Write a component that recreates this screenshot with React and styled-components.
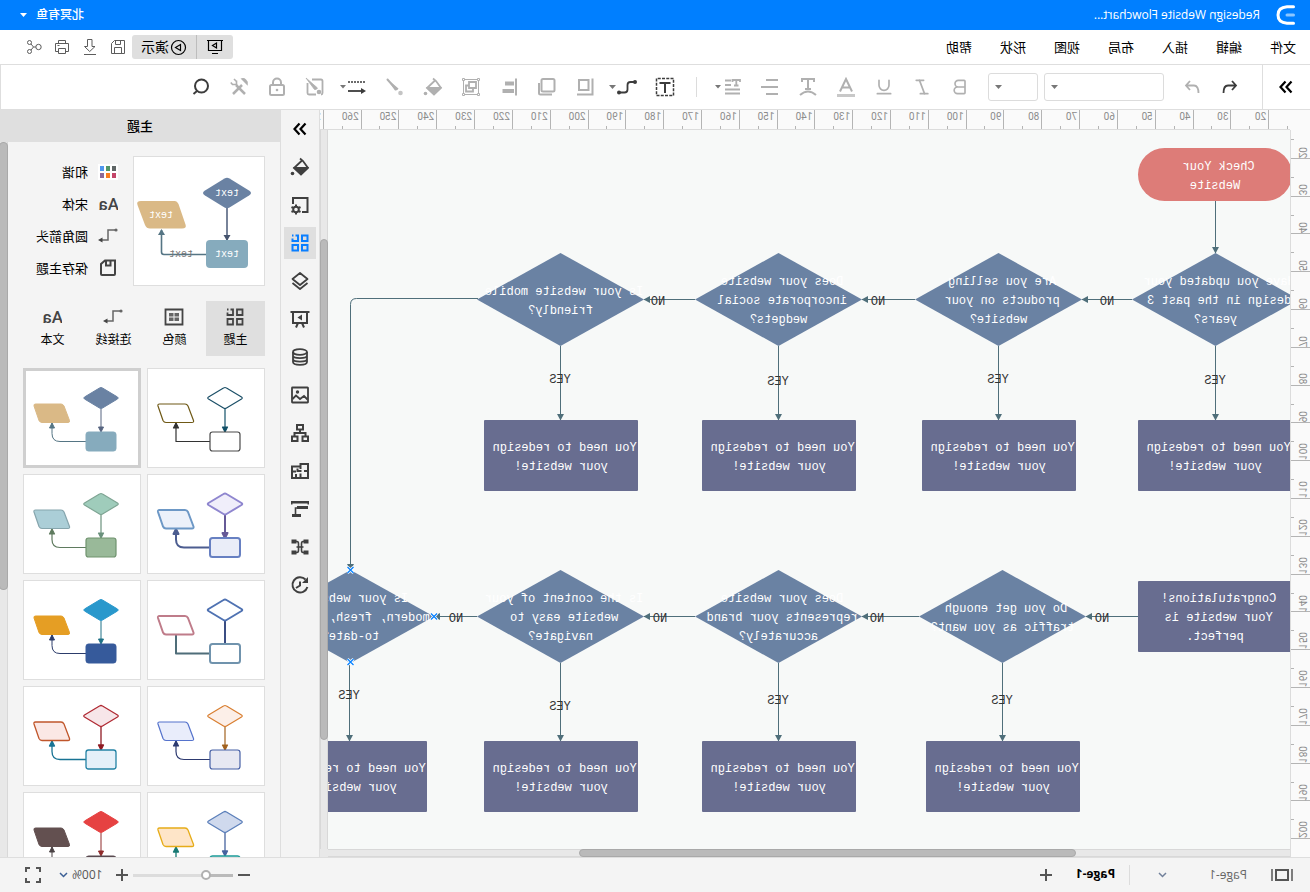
import React from "react";
import styled, { createGlobalStyle, css } from "styled-components";
import { Bold, Italic, Underline } from "lucide-react";

const UI_FONT = `"Open Sans", "Noto Sans CJK SC", sans-serif`;
const NODE_FONT = `"Liberation Mono", "Noto Sans CJK SC", monospace`;

const Global = createGlobalStyle`
  *, *::before, *::after { box-sizing: border-box; }
  body { margin: 0; overflow: hidden; background: #fff; }
  button, select, input { font: inherit; color: inherit; margin: 0; }
  button { border: 0; padding: 0; background: none; cursor: pointer; }
  svg { display: block; }
`;

const Shell = styled.div`
  display: flex;
  flex-direction: column;
  height: 100vh;
  font-family: ${UI_FONT};
  font-size: 12px;
  color: #000;
  background: #fff;
  transform: scaleX(-1);
`;

/* ---------- header ---------- */
const TitleBar = styled.header`
  flex: none;
  display: flex;
  align-items: center;
  justify-content: space-between;
  height: 30px;
  padding: 0 20px 0 14px;
  background: #007fff;
  color: #fff;
`;
const Brand = styled.div`
  display: flex;
  align-items: center;
  gap: 16px;
`;
const DocName = styled.h1`
  margin: 0;
  font-size: 12px;
  font-weight: 400;
  line-height: 16px;
`;
const UserButton = styled.button`
  display: flex;
  align-items: center;
  gap: 9px;
  font-weight: 500;
  line-height: 16px;
`;

const MenuBar = styled.nav`
  flex: none;
  display: flex;
  align-items: center;
  justify-content: space-between;
  height: 35px;
  padding: 0 20px 0 14px;
  border-bottom: 1px solid #dedede;
`;
const MenuList = styled.div`
  display: flex;
  gap: 28px;
`;
const MenuLink = styled.a`
  font-size: 13px;
  line-height: 20px;
  color: #000;
  text-decoration: none;
`;
const FileActions = styled.div`
  display: flex;
  align-items: center;
`;
const PresentGroup = styled.div`
  display: flex;
  height: 24px;
  border-radius: 3px;
  overflow: hidden;
  background: #dfdfdf;
`;
const PresentButton = styled.button`
  display: flex;
  align-items: center;
  gap: 1px;
  padding: 0 9px;
  font-size: 14px;
  line-height: 20px;
  & + & { border-left: 1px solid #bdbdbd; }
`;
const FileButton = styled.button`
  display: grid;
  place-items: center;
  width: 28px;
  height: 28px;
  color: #5c5c5c;
`;

/* ---------- tool bar ---------- */
const ToolBar = styled.div`
  flex: none;
  display: flex;
  align-items: center;
  height: 45px;
  border-bottom: 1px solid #dedede;
  border-right: 1px solid #dedede;
`;
const ExpandButton = styled.button`
  display: grid;
  place-items: center;
  width: 48px;
  height: 44px;
  border-right: 1px solid #dedede;
`;
const Tools = styled.div`
  display: flex;
  align-items: center;
  padding-left: ${(p) => p.$lead}px;
`;
const Tool = styled.button`
  display: grid;
  place-items: center;
  width: 38px;
  height: 32px;
  margin-right: ${(p) => (p.$menu ? 4 : 0)}px;
  color: ${(p) => (p.$active ? "#3c3c3c" : "#b0b0b0")};
`;
const Pickers = styled.div`
  display: flex;
  gap: 6px;
  margin: 0 9px;
`;
const Picker = styled.label`
  position: relative;
  display: block;
  width: ${(p) => p.$width}px;
  svg { position: absolute; right: 7px; top: 12px; pointer-events: none; }
`;
const PickerSelect = styled.select`
  appearance: none;
  display: block;
  width: 100%;
  height: 28px;
  padding: 0 16px 0 6px;
  border: 1px solid #dcdcdc;
  border-radius: 3px;
  background: #fff;
`;
const Separator = styled.span`
  width: 1px;
  height: ${(p) => p.$height}px;
  background: #dcdcdc;
`;

/* ---------- work area ---------- */
const Work = styled.main`
  flex: 1;
  min-height: 0;
  display: flex;
`;
const Stage = styled.section`
  flex: 1;
  min-width: 0;
  display: grid;
  grid-template-columns: 20px minmax(0, 1fr) 8px;
  grid-template-rows: 20px minmax(0, 1fr) 8px;
  background: #fafafa;
`;
const RulerTop = styled.div`
  grid-column: 2 / 4;
  grid-row: 1;
  overflow: hidden;
  border-bottom: 1px solid #dcdcdc;
`;
const RulerTopScale = styled.div`
  display: grid;
  grid-template-columns: repeat(27, 1fr);
  width: 1021px;
  height: 19px;
  margin-left: -17px;
`;
const markText = css`
  font-family: Roboto, sans-serif;
  font-size: 10px;
  line-height: 12px;
  color: #8c8c8c;
`;
const TopMark = styled.span`
  ${markText}
  padding: 1px 0 0 2px;
  border-left: 1px solid #b4b4b4;
  background: linear-gradient(#b4b4b4, #b4b4b4) 18px 16px / 1px 3px no-repeat;
`;
const RulerSide = styled.div`
  grid-column: 1;
  grid-row: 2 / 4;
  overflow: hidden;
  border-right: 1px solid #dcdcdc;
`;
const RulerSideScale = styled.div`
  display: grid;
  grid-template-rows: repeat(20, 1fr);
  height: 756px;
  margin-top: -9px;
`;
const SideMark = styled.span`
  ${markText}
  display: flex;
  align-items: flex-end;
  padding-left: 2px;
  border-bottom: 1px solid #b4b4b4;
  background: linear-gradient(#b4b4b4, #b4b4b4) 16px 18px / 3px 1px no-repeat;
  b {
    font-weight: 400;
    writing-mode: vertical-rl;
    transform: rotate(180deg);
  }
`;
const Canvas = styled.div`
  grid-column: 2;
  grid-row: 2;
  position: relative;
  overflow: hidden;
  background: #f7f9f8;
`;
const Track = styled.div`
  display: flex;
  background: #e8e8e8;
  border: 1px solid #d8d8d8;
  border-width: ${(p) => (p.$vertical ? "0 1px" : "1px 0")};
  flex-direction: ${(p) => (p.$vertical ? "column" : "row")};
  grid-column: ${(p) => (p.$vertical ? 3 : 2)};
  grid-row: ${(p) => (p.$vertical ? 2 : 3)};
  padding: ${(p) => (p.$vertical ? `${p.$from}px 0 0` : `0 0 0 ${p.$from}px`)};
`;
const Thumb = styled.span`
  flex: 0 0 ${(p) => p.$size}px;
  margin: ${(p) => (p.$vertical ? "0 -1px" : "-1px 0")};
  border: 1px solid #a9a9a9;
  border-radius: 4px;
  background: #bababa;
`;
const TrackCorner = styled.span`
  grid-column: 3;
  grid-row: 3;
  background: #e8e8e8;
`;

/* ---------- diagram ---------- */
const shapes = {
  diamond: css`
    width: 167px; height: 93px;
    &::before { background: #6a82a3; clip-path: polygon(50% 0, 100% 50%, 50% 100%, 0 50%); }
  `,
  box: css`
    width: 154px; height: 71px;
    &::before { background: #686d90; border-radius: 1px; }
  `,
  start: css`
    width: 154px; height: 53px;
    &::before { background: #dd7c78; border-radius: 27px; }
  `,
};
const Node = styled.div`
  position: absolute;
  z-index: 0;
  display: flex;
  align-items: center;
  justify-content: center;
  padding-top: 4px;
  font: 12px/19px ${NODE_FONT};
  color: #fff;
  white-space: pre;
  text-align: center;
  &::before { content: ""; position: absolute; inset: 0; z-index: -1; }
  ${(p) => shapes[p.$shape]}
`;
const EdgeLabel = styled.span`
  position: absolute;
  width: 30px;
  margin: -7px 0 0 -15px;
  font: 12px/16px ${NODE_FONT};
  color: #333;
  text-align: center;
`;
const Edges = styled.svg`
  position: absolute;
  left: 0;
  top: 0;
  overflow: visible;
`;

const REDESIGN = "You need to redesign \nyour website!";
const nodes = [
  ["start", -2, 18, "Check Your \nWebsite"],
  ["diamond", -9, 123, "Have you updated your \ndesign in the past 3 \nyears?"],
  ["diamond", 208, 123, "Are you selling \nproducts on your \nwebsite?"],
  ["diamond", 428, 123, "Does your website \nincorporate social \nwedgets?"],
  ["diamond", 646, 123, "Is your website mobile \nfriendly?"],
  ["box", -2, 290, REDESIGN],
  ["box", 214, 290, REDESIGN],
  ["box", 434, 290, REDESIGN],
  ["box", 652, 290, REDESIGN],
  ["box", -2, 451, "Congratulations! \nYour website is \nperfect."],
  ["diamond", 204, 440, "Do you get enough \ntraffic as you want?"],
  ["diamond", 428, 440, "Does your website \nrepresents your brand \naccurately?"],
  ["diamond", 646, 440, "Is the content of your \nwebsite easy to \nnavigate?"],
  ["diamond", 856, 440, "Is your website \nmodern, fresh, and up-\nto-date?"],
  ["box", 210, 611, REDESIGN],
  ["box", 434, 611, REDESIGN],
  ["box", 652, 611, REDESIGN],
  ["box", 863, 611, REDESIGN],
];
const edgeLabels = [
  [183, 171, "NO"], [412, 171, "NO"], [632, 171, "NO"],
  [188, 488, "NO"], [413, 488, "NO"], [630, 488, "NO"], [834, 488, "NO"],
  [75, 250, "YES"], [292, 249, "YES"], [512, 251, "YES"], [730, 249, "YES"],
  [288, 570, "YES"], [512, 570, "YES"], [730, 576, "YES"], [941, 565, "YES"],
];
const edges = [
  "M74.5 71V123", "M74.5 216V290", "M291.5 216V290", "M511.5 216V290", "M729.5 216V290",
  "M158 169.5H208", "M375 169.5H428", "M595 169.5H646",
  "M812 168.5H933.5Q939.5 168.5 939.5 174.5V440",
  "M152 486.5H204", "M371 486.5H428", "M595 486.5H646", "M813 486.5H856",
  "M287.5 533V611", "M511.5 533V611", "M729.5 533V611", "M940.5 533V611",
];
const anchors = [[939.5, 440], [856, 486.5], [939.5, 532]];

/* ---------- icons ---------- */
const Icon = ({ w = 20, h = 20, sw = 2, children }) => (
  <svg width={w} height={h} viewBox={`0 0 ${w} ${h}`} fill="none" stroke="currentColor" strokeWidth={sw} aria-hidden="true">
    {children}
  </svg>
);
const CaretDown = ({ color = "currentColor" }) => (
  <svg width="7" height="4" viewBox="0 0 7 4" aria-hidden="true"><path d="M0 0h7L3.500 4z" fill={color} /></svg>
);
const Chevron = ({ color }) => (
  <svg width="9" height="6" viewBox="0 0 9 6" fill="none" stroke={color} strokeWidth="1.500" aria-hidden="true"><path d="M1 1l3.500 3.500L8 1" /></svg>
);
const DoubleChevron = () => <Icon w={14} h={14} sw={2.2}><path d="M1.500 1.500L6.500 7l-5 5.500M7.500 1.500L12.500 7l-5 5.500" /></Icon>;

const fileIcons = {
  保存: <Icon w={16} h={16} sw={1}><path d="M1.500 1.500H11.500L14.500 4.500V14.500H1.500zM4.500 14.500V8.500H11.500V14.500M5.500 1.500V5.500H10.500V1.500" /></Icon>,
  下载: <Icon w={16} h={18} sw={1}><path d="M2 16.500H14M6 1.500H10.500V8.500H13.500L8.300 13.500L3 8.500H6z" /></Icon>,
  打印: <Icon w={16} h={16} sw={1}><path d="M4.500 4.500V1.500H11.500V4.500M4.500 12.500H1.500V4.500H14.500V12.500H11.500M4.500 9.500H11.500V14.500H4.500zM10.500 6.500H12.500" /></Icon>,
  分享: <Icon w={16} h={16} sw={1}><circle cx="3.500" cy="8" r="2.700" /><circle cx="12.500" cy="3.500" r="2" /><circle cx="12.500" cy="12.500" r="2" /><path d="M6.200 8H8.500L11 5M8.500 8L11 11" /></Icon>,
};

const Bucket = () => (
  <Icon sw={1.8}>
    <path d="M10 1.500L7 4L2 11L9 17.500L16 11L8 3.500" />
    <path d="M3 11H15L9 17z" fill="currentColor" />
    <circle cx="17.500" cy="16.500" r="1.800" fill="currentColor" stroke="none" />
  </Icon>
);
const QuadSquares = ({ sw = 2 }) => (
  <Icon w={18} h={18} sw={sw}>
    <path d="M1.500 1.500H7V7H1.500zM1.500 11H7V16.500H1.500zM11 11H16.500V16.500H11z" />
    <path d="M13.500 1.500H11V7H16.500V4.500M15.500 1.500h1.500" />
  </Icon>
);

const textTools = [
  ["加粗", <Bold size={20} strokeWidth={2} />],
  ["斜体", <Italic size={20} strokeWidth={2} />],
  ["下划线", <Underline size={20} strokeWidth={2} />],
  ["字体颜色", <Icon><path d="M4 14.500L10 2L16 14.500M6 10.500H14" /><path d="M1 18.500H19" stroke="#c8c8c8" strokeWidth="3" /></Icon>],
  ["文字路径", <Icon><path d="M4 5V2H16V5M10 2V12M7 12H13M2 18Q10 11 18 18" /></Icon>],
  ["对齐", <Icon><path d="M2 3H14M2 10H19M2 17H14" strokeWidth="1.800" /></Icon>],
];
const insertTools = [
  ["文本框", true, <Icon sw={1.5}><path d="M1.500 1.500H18.500V18.500H1.500z" strokeDasharray="3 1.250" /><path d="M4.500 6H15.500M10 6V16" strokeWidth="2" /></Icon>],
  ["连接线", true, <Icon w={38} sw={1.8}><circle cx="11" cy="5" r="2" fill="currentColor" stroke="none" /><circle cx="27" cy="15.500" r="2" fill="currentColor" stroke="none" /><path d="M11 5H15.500Q18.500 5 18.500 8V12.500Q18.500 15.500 21.500 15.500H27" /><path d="M30 8h7L33.500 12z" fill="#777" stroke="none" /></Icon>, true],
  ["置于底层", false, <Icon><path d="M6.500 3H16V13H6.500zM2.500 1.500V17.500H18" /></Icon>],
  ["置于顶层", false, <Icon><rect x="2.500" y="2" width="13" height="12.500" rx="1.500" /><path d="M18 6V16Q18 17.500 16.500 17.500H5" /></Icon>],
  ["对齐形状", false, <Icon><path d="M3 1.500V18.500" /><path d="M5 4.500H14V8.500H5zM5 12H16.500V16H5z" fill="currentColor" stroke="none" /></Icon>],
  ["组合", false, <Icon sw={1}><path d="M2.500 2.500H17.500V17.500H2.500z" /><path d="M1.500 1.500h2v2h-2zM16.500 1.500h2v2h-2zM1.500 16.500h2v2h-2zM16.500 16.500h2v2h-2z" fill="#fff" /><path d="M5 5H12V11H5zM8 11V14.500H15V8.500H12" strokeWidth="1.800" /></Icon>],
  ["填充", false, <Bucket />],
  ["线条", false, <Icon><path d="M18.500 1.500L10 13.500Q7.500 14 6.500 11.500z" fill="currentColor" stroke="none" /><path d="M18 2L9 12" /><circle cx="4.500" cy="16" r="2.300" fill="#c4c4c4" stroke="none" /></Icon>],
  ["线型", true, <Icon w={38} h={20} sw={1.6}><path d="M11 5H28" strokeDasharray="2 1" /><path d="M13 14H28" strokeWidth="1.800" /><path d="M10 14l5-3v6z" fill="currentColor" stroke="none" /><path d="M30 8h6L33 11.500z" fill="#777" stroke="none" /></Icon>, true],
  ["样式", false, <Icon sw={1.8}><path d="M13 2.500H4Q2.500 2.500 2.500 4V16Q2.500 17.500 4 17.500M9 17.500H16Q17.500 17.500 17.500 16V6" /><path d="M19 1L10.500 12.500Q8.500 13 7.500 11z" fill="currentColor" strokeWidth=".8" /><circle cx="6" cy="15" r="2.300" fill="currentColor" stroke="none" /></Icon>],
  ["锁定", false, <Icon><rect x="3" y="8" width="14" height="10" rx="1.500" /><path d="M6 8V5.500A4 4 0 0 1 14 5.500V8" /><circle cx="10" cy="13" r="1.300" fill="currentColor" stroke="none" /></Icon>],
  ["工具", false, <Icon><path d="M7 8L16 17" strokeWidth="2.500" /><path d="M2 7L7 2Q5 1.500 3.500 3L2 5z" fill="currentColor" strokeWidth="1.500" /><path d="M13 8L4 17" strokeWidth="2.500" /><path d="M12.500 3.500V7.500H16.500L18.200 5.500M15 2L12.500 4.500" strokeWidth="1.600" /></Icon>],
  ["搜索", true, <Icon><circle cx="9.500" cy="9" r="6.500" /><path d="M14 14L17.500 17" /></Icon>],
];

const stripIcons = [
  ["填充", <Bucket />],
  ["页面设置", <Icon><path d="M8 17H2.500V3H17V9" /><circle cx="14" cy="14.500" r="2.800" /><path d="M14 9.500V11M14 18V19.500M9.500 12l1.500.8M17 16.200l1.500.8M9.500 17l1.500-.8M17 12.800l1.500-.8" /></Icon>],
  ["主题", <QuadSquares />],
  ["图层", <Icon sw={1.8}><path d="M10 2L17.500 8L10 14L2.500 8zM2.500 12L10 18L17.500 12" strokeLinejoin="round" /></Icon>],
  ["演示文稿", <Icon><path d="M.5 3H19.500M3 3V14H17V3M8 14L6 18.500M12 14L14 18.500" /><path d="M8 5.500v6l4.500-3z" fill="currentColor" stroke="none" /></Icon>],
  ["数据", <Icon sw={1.8}><ellipse cx="10" cy="5" rx="7" ry="2.800" /><path d="M3 5V15C3 18.700 17 18.700 17 15V5M3 8.500C3 12 17 12 17 8.500M3 12C3 15.500 17 15.500 17 12" /></Icon>],
  ["图片", <Icon sw={1.8}><rect x="2" y="2.500" width="16" height="15" rx=".5" /><path d="M2.500 14.500L6 11L10 14L14 10.500L17.500 14" /><circle cx="12.500" cy="7" r="1.700" fill="currentColor" stroke="none" /></Icon>],
  ["组织结构", <Icon><path d="M7 2H13V6.500H7zM2 13.500H7.500V18H2zM12.500 13.500H18V18H12.500zM10 6.500V10M4.500 13.500V10H15.500V13.500" /></Icon>],
  ["平面图", <Icon><path d="M2 3H9.500V5.500H18V17H2zM9.500 5.500V8M2 10H6M8.500 10H12.500V7.500M9.500 12.500V17M14 17V13M14 10.500H18" /></Icon>],
  ["甘特图", <Icon><path d="M1 2H19V5.500H17.500V4.500H2.500V5.500H1z" fill="currentColor" stroke="none" /><path d="M2 8.500H13" strokeWidth="3" /><path d="M11 9H14.500V16" strokeWidth="1.600" /><path d="M9 16.500H18" strokeWidth="3" /></Icon>],
  ["网络", <Icon sw={1.6}><path d="M1.500 2.500h5v4h-5zM13.500 2.500h5v4h-5zM1.500 13.500h5v4h-5zM13.500 13.500h5v4h-5z" fill="currentColor" stroke="none" /><path d="M5 4.500H7Q8.500 4.500 8.500 7V13Q8.500 15.500 7 15.500H5M15 4.500H13Q11.500 4.500 11.500 7V13Q11.500 15.500 13 15.500H15M6.500 10H13.500" /></Icon>],
  ["历史记录", <Icon><path d="M4.500 4.500A7.600 7.600 0 1 1 2.600 12" /><path d="M2 2V8H8z" fill="currentColor" stroke="none" /><path d="M10 6.500V10.500L14 13" /></Icon>],
];

/* ---------- side strip and panel ---------- */
const Strip = styled.aside`
  flex: none;
  display: flex;
  flex-direction: column;
  align-items: center;
  gap: 6px;
  width: 40px;
  padding-top: 3px;
  background: #f4f4f4;
  border: 1px solid #dedede;
  border-width: 0 1px;
`;
const StripButton = styled.button`
  display: grid;
  place-items: center;
  width: 32px;
  height: 32px;
  color: ${(p) => (p.$strong ? "#000" : p.$active ? "#0a7fff" : "#3f3f3f")};
  background: ${(p) => (p.$active ? "#dfdfdf" : "none")};
`;
const Panel = styled.aside`
  flex: none;
  display: flex;
  flex-direction: column;
  width: 280px;
  background: #f4f4f4;
`;
const PanelTitle = styled.h2`
  flex: none;
  margin: 0;
  height: 32px;
  font-size: 13px;
  line-height: 32px;
  font-weight: 500;
  text-align: center;
  background: #dfdfdf;
`;
const PanelBody = styled.div`
  flex: 1;
  min-height: 0;
  display: flex;
`;
const PanelScroll = styled.div`
  flex: 1;
  overflow: hidden;
  padding: 14px 15px 0;
`;
const PanelTrack = styled.div`
  flex: none;
  display: flex;
  flex-direction: column;
  width: 8px;
  background: #e8e8e8;
  border-left: 1px solid #d8d8d8;
`;
const Summary = styled.div`
  display: flex;
  gap: 15px;
`;
const Preview = styled.div`
  flex: none;
  width: 132px;
  height: 130px;
  background: #fff;
  border: 1px solid #dedede;
`;
const Options = styled.div`
  display: flex;
  flex-direction: column;
`;
const Option = styled.button`
  display: flex;
  align-items: center;
  gap: 10px;
  height: 32px;
  font-size: 13px;
  line-height: 20px;
  svg { color: #444; }
`;
const Tabs = styled.div`
  display: flex;
  gap: 2px;
  margin: 15px -8px 12px 0;
`;
const Tab = styled.button`
  display: flex;
  flex-direction: column;
  align-items: center;
  gap: 3px;
  width: 59px;
  height: 55px;
  padding-top: 6px;
  font-size: 12px;
  line-height: 20px;
  background: ${(p) => (p.$active ? "#dfdfdf" : "none")};
  svg { color: #444; }
`;
const Themes = styled.div`
  display: grid;
  grid-template-columns: repeat(2, 118px);
  gap: 6px;
`;
const ThemeCard = styled.button`
  display: grid;
  place-items: center;
  height: 100px;
  background: #fff;
  border: ${(p) => (p.$selected ? "3px solid #cfcfcf" : "1px solid #dedede")};
  overflow: hidden;
  svg { margin: ${(p) => (p.$selected ? "-2px" : "0")}; }
`;

const AaIcon = () => (
  <svg width="20" height="20" viewBox="0 0 20 20" aria-hidden="true">
    <text x="-1" y="16" fontFamily="Roboto, sans-serif" fontSize="17" fontWeight="500" fill="#444">Aa</text>
  </svg>
);
const RouteIcon = () => (
  <Icon sw={1.5}><circle cx="2" cy="4" r="1.600" fill="#666" stroke="none" /><path d="M2 4H10V14H17" stroke="#666" /><path d="M20 14l-4.500-2.500v5z" fill="#444" stroke="none" /></Icon>
);
const SwatchIcon = () => (
  <svg width="20" height="16" viewBox="0 0 20 16" aria-hidden="true">
    <path d="M0 0H20V16H0z" fill="#fff" />
    {["#5f6666", "#539668", "#4f97ee", "#c44569", "#fb7f1f", "#8e6a99"].map((c, i) => (
      <rect key={c} x={2 + (i % 3) * 6} y={2 + Math.floor(i / 3) * 7} width="4" height="5" fill={c} />
    ))}
  </svg>
);

const solid = (d, p, r, a, b) => ({ d: [d, d], p: [p, p], r: [r, r], a, b, w: 1 });
const themes = [
  { name: "线框", d: ["#fff", "#1c5068"], p: ["#fff", "#6f5916"], r: ["#fff", "#4a4a4a"], a: "#125068", b: "#333", w: 1.2, sharp: true },
  { name: "和谐", ...solid("#6a82a3", "#dab986", "#86abbd", "#566480", "#557584") },
  { name: "淡紫", d: ["#f0eefa", "#8f86cf"], p: ["#ecf1fa", "#6d98c6"], r: ["#eaedf8", "#6780c2"], a: "#665a97", b: "#4c5d90", w: 2 },
  { name: "薄荷", d: ["#9fccbb", "#7fa594"], p: ["#abced7", "#86a5ad"], r: ["#99b999", "#70936f"], a: "#6b917c", b: "#5f7b5f", w: 1.2 },
  { name: "描边", d: ["#fff", "#4f72b2"], p: ["#fff", "#bf7c8a"], r: ["#fff", "#7093ad"], a: "#3b4d83", b: "#4f6d79", w: 2, sharp: true, plain: true },
  { name: "鲜明", ...solid("#2998cc", "#e59e24", "#365a9b", "#1f7186", "#2c3c6b") },
  { name: "柔和", d: ["#fcefe8", "#d97f31"], p: ["#e9edfb", "#5573cc"], r: ["#e7e8f2", "#4760a6"], a: "#a2621f", b: "#2d3a70", w: 1.2 },
  { name: "玫瑰", d: ["#f7e6e9", "#b02a33"], p: ["#fbe8e5", "#c0562b"], r: ["#e5f0f9", "#2483a5"], a: "#8f1a22", b: "#187394", w: 1.3 },
  { name: "晴空", d: ["#cfd9ed", "#5b7fba"], p: ["#fee5c8", "#e6ac18"], r: ["#dff3f2", "#1d9a98"], a: "#46639f", b: "#187a74", w: 1.3 },
  { name: "热烈", ...solid("#e64242", "#635050", "#5a4a50", "#8f2a2a", "#4a4244") },
];
const ThemeArt = ({ t }) => (
  <svg width="116" height="98" viewBox="1 1 116 98" fill="none" strokeWidth={t.w} strokeLinejoin="round" aria-hidden="true">
    <path d="M40 41V63" stroke={t.a} />
    <path d={t.sharp ? "M55 73.500H89V55" : "M55 73.500H81Q89 73.500 89 65.500V55"} stroke={t.b} />
    {!t.plain && <path d="M37.500 59h5l-2.500 5z" fill={t.a} stroke={t.a} />}
    {!t.plain && <path d="M86.500 60h5l-2.500-5z" fill={t.b} stroke={t.b} />}
    <path d="M38.500 20Q40 19 41.500 20L56.500 29Q58 30 56.500 31L41.500 40Q40 41 38.500 40L23.500 31Q22 30 23.500 29z" fill={t.d[0]} stroke={t.d[1]} />
    <path d="M80 36H105.500Q107.500 36 107 38L102 52.500Q101 54.500 99 54.500H73Q71 54.500 71.500 52.500L77 38Q78 36 80 36z" fill={t.p[0]} stroke={t.p[1]} />
    <rect x="25" y="64" width="30" height="19" rx="2.500" fill={t.r[0]} stroke={t.r[1]} />
  </svg>
);
const PreviewArt = () => (
  <svg width="130" height="128" viewBox="1 1 130 128" fill="none" strokeWidth="1.600" aria-hidden="true">
    <path d="M38 52V84" stroke="#566480" />
    <path d="M34.500 79h7l-3.500 6z" fill="#46546e" />
    <path d="M59 98.500H101Q103.500 98.500 103.500 96V74" stroke="#557584" />
    <path d="M100 79h7l-3.500-6z" fill="#557584" />
    <path d="M35.500 22.500Q38 21 40.500 22.500L60 34.500Q64 37 60 39.500L40.500 51.500Q38 53 35.500 51.500L16 39.500Q12 37 16 34.500z" fill="#6a82a3" />
    <path d="M90 45H124Q129 45 127.500 49L120 69Q118.500 72.500 115 72.500H83Q78 72.500 79.500 68.500L86.500 48Q88 45 90 45z" fill="#dab986" />
    <rect x="17" y="84" width="42" height="28" rx="4" fill="#86abbd" />
    <g fontFamily="Liberation Mono, monospace" fontSize="10" textAnchor="middle">
      <text x="38" y="40" fill="#fff">text</text>
      <text x="104" y="62" fill="#fff">text</text>
      <text x="38" y="101" fill="#fff">text</text>
      <text x="84" y="101" fill="#777">text</text>
    </g>
  </svg>
);

/* ---------- footer ---------- */
const Footer = styled.footer`
  flex: none;
  display: flex;
  align-items: center;
  justify-content: space-between;
  height: 35px;
  padding: 0 24px 0 17px;
  background: #f4f4f4;
  border-top: 1px solid #dedede;
  color: #555;
`;
const FooterGroup = styled.div`
  display: flex;
  align-items: center;
  gap: ${(p) => p.$gap}px;
`;
const PageSelect = styled.button`
  display: flex;
  align-items: center;
  gap: 42px;
  font-size: 12px;
  line-height: 20px;
  color: #666;
`;
const PageTab = styled.button`
  padding-bottom: 2px;
  font-size: 12px;
  line-height: 20px;
  font-weight: 700;
  color: #000;
`;
const IconButton = styled.button`
  display: grid;
  place-items: center;
`;
const ZoomSlider = styled.input`
  appearance: none;
  width: 100px;
  height: 12px;
  background: linear-gradient(90deg, #bababa 26%, #dcdcdc 26%) center / 100% 3px no-repeat;
  &::-webkit-slider-thumb {
    appearance: none;
    width: 10px;
    height: 10px;
    border: 2px solid #b0b0b0;
    border-radius: 50%;
    background: #fff;
  }
`;
const ZoomValue = styled.button`
  display: flex;
  align-items: center;
  gap: 4px;
  padding-left: 8px;
  font-size: 12px;
  line-height: 20px;
`;

const tens = (from, count) => Array.from({ length: count }, (_, i) => from + i * 10);

export default function App() {
  return (
    <Shell>
      <Global />
      <TitleBar>
        <Brand>
          <svg width="20" height="20" viewBox="0 0 20 20" fill="none" strokeLinecap="round" strokeWidth="3" aria-hidden="true">
            <path d="M2.500 1.800H9Q18 2.500 18 10T9 18.200H2.500" stroke="#fff" />
            <path d="M2.500 10H9" stroke="#8cc6ff" />
          </svg>
          <DocName>Redesign Website Flowchart...</DocName>
        </Brand>
        <UserButton>北冥有鱼<CaretDown /></UserButton>
      </TitleBar>

      <MenuBar>
        <MenuList>
          {["文件", "编辑", "插入", "布局", "视图", "形状", "帮助"].map((m) => <MenuLink key={m} href="#">{m}</MenuLink>)}
        </MenuList>
        <FileActions>
          <PresentGroup>
            <PresentButton aria-label="放映">
              <Icon w={18} h={16} sw={1.2}><path d="M1 1.500H17M2.500 1.500V11.500H15.500V1.500M6 14.500H12" /><path d="M7.500 4v5l4-2.500z" /></Icon>
            </PresentButton>
            <PresentButton>
              <Icon w={17} h={17} sw={1.2}><circle cx="8.500" cy="8.500" r="7" /><path d="M6.500 5.500v6l5-3z" /></Icon>演示
            </PresentButton>
          </PresentGroup>
          {Object.entries(fileIcons).map(([k, v]) => <FileButton key={k} aria-label={k}>{v}</FileButton>)}
        </FileActions>
      </MenuBar>

      <ToolBar>
        <ExpandButton aria-label="展开"><DoubleChevron /></ExpandButton>
        <Tools $lead={13}>
          <Tool $active aria-label="撤销"><Icon w={16} h={16} sw={1.8}><path d="M6 2L2 6.500L6 11M2 6.500H10Q14.500 6.500 14.500 14" /></Icon></Tool>
          <Tool aria-label="重做"><Icon w={16} h={16} sw={1.8}><path d="M10 2L14 6.500L10 11M14 6.500H6Q1.500 6.500 1.500 14" /></Icon></Tool>
        </Tools>
        <Pickers>
          <Picker $width={120}><PickerSelect aria-label="字体"><option></option></PickerSelect><CaretDown color="#777" /></Picker>
          <Picker $width={50}><PickerSelect aria-label="字号"><option></option></PickerSelect><CaretDown color="#777" /></Picker>
        </Pickers>
        <Tools $lead={0}>
          {textTools.map(([k, v]) => <Tool key={k} aria-label={k}>{v}</Tool>)}
          <Tool aria-label="行距">
            <Icon w={38} sw={1.8}><path d="M11 5V3H18.500V5M14.700 3V8.500M12.500 8.500H17M20 3.500H26M20 8H26M11 12.500H26M11 16.500H26" /><path d="M30 8h6L33 11.500z" fill="#777" stroke="none" /></Icon>
          </Tool>
        </Tools>
        <Tools $lead={16}>
          <Separator $height={20} />
        </Tools>
        <Tools $lead={12}>
          {insertTools.map(([k, on, v, menu]) => <Tool key={k} $active={on} $menu={menu} aria-label={k}>{v}</Tool>)}
        </Tools>
      </ToolBar>

      <Work>
        <Stage>
          <RulerTop><RulerTopScale>{tens(10, 27).map((n) => <TopMark key={n}>{n > 10 && n}</TopMark>)}</RulerTopScale></RulerTop>
          <RulerSide><RulerSideScale>{tens(20, 20).map((n) => <SideMark key={n}>{n <= 200 && <b>{n}</b>}</SideMark>)}</RulerSideScale></RulerSide>
          <Canvas>
            <Edges width="962" height="720" fill="none" stroke="#4f6f7a">
              <defs>
                <marker id="tip" viewBox="0 0 7 7" refX="6" refY="3.500" markerWidth="7" markerHeight="7" orient="auto" markerUnits="userSpaceOnUse">
                  <path d="M0 0L6.500 3.500L0 7z" fill="#4f6f7a" stroke="none" />
                </marker>
              </defs>
              {edges.map((d) => <path key={d} d={d} markerEnd="url(#tip)" />)}
            </Edges>
            {nodes.map(([shape, x, y, text]) => (
              <Node key={`${x},${y}`} $shape={shape} style={{ left: x, top: y }}>{text}</Node>
            ))}
            {edgeLabels.map(([x, y, text]) => (
              <EdgeLabel key={`${x},${y}`} style={{ left: x, top: y }}>{text}</EdgeLabel>
            ))}
            <Edges width="962" height="720" fill="none">
              {anchors.map(([x, y]) => (
                <g key={`${x},${y}`}>
                  <path d={`M${x - 3} ${y - 3}l6 6m0-6l-6 6`} stroke="#fff" strokeWidth="3" />
                  <path d={`M${x - 3} ${y - 3}l6 6m0-6l-6 6`} stroke="#0a84ff" strokeWidth="1.400" />
                </g>
              ))}
            </Edges>
          </Canvas>
          <Track $vertical $from={109}><Thumb $vertical $size={501} /></Track>
          <Track $from={214}><Thumb $size={497} /></Track>
          <TrackCorner />
        </Stage>

        <Strip>
          <StripButton $strong aria-label="收起"><DoubleChevron /></StripButton>
          {stripIcons.map(([k, v]) => <StripButton key={k} $active={k === "主题"} aria-label={k}>{v}</StripButton>)}
        </Strip>

        <Panel>
          <PanelTitle>主题</PanelTitle>
          <PanelBody>
            <PanelScroll>
              <Summary>
                <Preview><PreviewArt /></Preview>
                <Options>
                  <Option><SwatchIcon />和谐</Option>
                  <Option><AaIcon />宋体</Option>
                  <Option><RouteIcon />圆角箭头</Option>
                  <Option><Icon><path d="M3 2.500H13L17 6V16Q17 17 16 17H4Q3 17 3 16zM7.500 2.500V7.500H12V2.500" /></Icon>保存主题</Option>
                </Options>
              </Summary>
              <Tabs>
                <Tab $active><Icon w={20} h={20} sw={1.8}><path d="M2.500 2.500H8V8H2.500zM2.500 12H8V17.500H2.500zM12 12H17.500V17.500H12zM14.500 2.500H12V8H17.500V5.500M16.500 2.500h1.500" /></Icon>主题</Tab>
                <Tab><Icon sw={1.8}><path d="M1.500 2.500H18.500V17.500H1.500z" /><path d="M5 6h4.500v3.500H5zM10.500 6H15v3.500h-4.500zM5 10.500h4.500V14H5zM10.500 10.500H15V14h-4.500z" fill="#666" stroke="none" /></Icon>颜色</Tab>
                <Tab><RouteIcon />连接线</Tab>
                <Tab><AaIcon />文本</Tab>
              </Tabs>
              <Themes>
                {themes.map((t) => <ThemeCard key={t.name} aria-label={t.name} $selected={t.name === "和谐"}><ThemeArt t={t} /></ThemeCard>)}
              </Themes>
            </PanelScroll>
            <PanelTrack><Thumb $vertical $size={448} /></PanelTrack>
          </PanelBody>
        </Panel>
      </Work>

      <Footer>
        <FooterGroup $gap={14}>
          <FooterGroup $gap={24}>
            <IconButton aria-label="页面列表"><Icon w={22} h={14} sw={2}><path d="M5 2H17V12H5z" /><path d="M1 1V13M21 1V13" strokeWidth="1.500" /></Icon></IconButton>
            <PageSelect>Page-1<Chevron color="#71809a" /></PageSelect>
          </FooterGroup>
          <FooterGroup $gap={14}>
            <span />
            <Separator $height={20} />
            <PageTab>Page-1</PageTab>
          </FooterGroup>
          <IconButton aria-label="添加页面"><Icon w={32} h={14}><path d="M16 1V13M10 7H22" /></Icon></IconButton>
        </FooterGroup>
        <FooterGroup $gap={17}>
          <FooterGroup $gap={5}>
            <IconButton aria-label="缩小"><Icon w={12} h={12}><path d="M0 6H12" /></Icon></IconButton>
            <ZoomSlider type="range" aria-label="缩放" min="0" max="100" defaultValue="24" />
            <IconButton aria-label="放大"><Icon w={12} h={12}><path d="M0 6H12M6 0V12" /></Icon></IconButton>
            <ZoomValue>100%<Chevron color="#3b5f95" /></ZoomValue>
          </FooterGroup>
          <IconButton aria-label="全屏"><Icon w={18} h={18}><path d="M2 6V2H6M12 2H16V6M16 12V16H12M6 16H2V12" /></Icon></IconButton>
        </FooterGroup>
      </Footer>
    </Shell>
  );
}
